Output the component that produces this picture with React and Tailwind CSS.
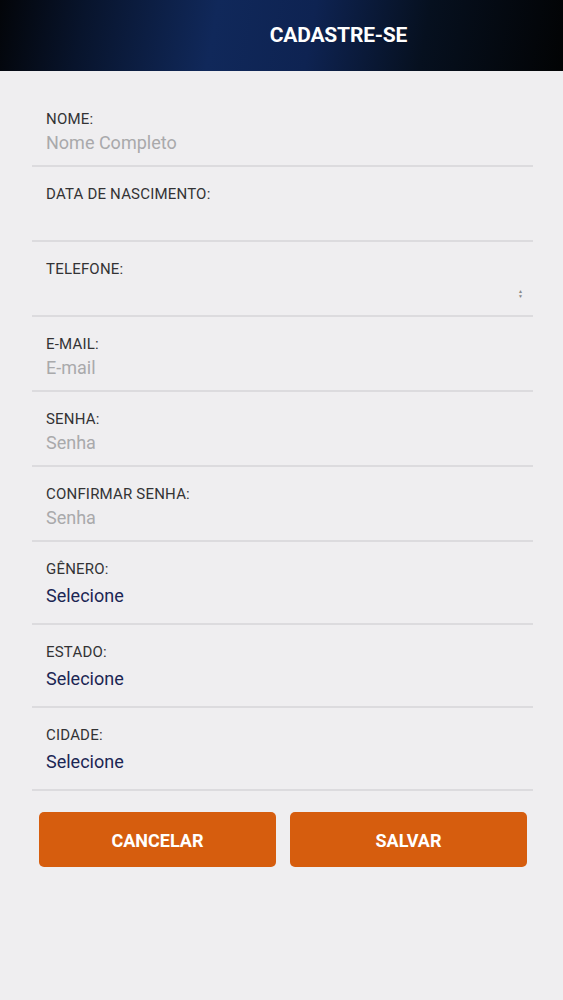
import { useState } from 'react'

const fields = [
  { label: 'NOME:', placeholder: 'Nome Completo', type: 'text' },
  { label: 'DATA DE NASCIMENTO:', placeholder: '', type: 'text' },
  { label: 'TELEFONE:', placeholder: '', type: 'number' },
  { label: 'E-MAIL:', placeholder: 'E-mail', type: 'text' },
  { label: 'SENHA:', placeholder: 'Senha', type: 'text' },
  { label: 'CONFIRMAR SENHA:', placeholder: 'Senha', type: 'text' },
]

const selects = ['GÊNERO:', 'ESTADO:', 'CIDADE:']

function App() {
  const [values, setValues] = useState({})

  return (
    <div className="min-h-[1000px] bg-[#efeef0]" style={{ fontFamily: 'Roboto, "Noto Sans", sans-serif' }}>
      {/* Header */}
      <div className="h-[71px] flex items-center bg-[linear-gradient(100deg,#030509_0%,#08142c_15%,#10285a_38%,#0e2352_55%,#06101f_75%,#020304_100%)]">
        <div className="w-[120px]" />
        <h1 className="flex-1 text-center text-white font-bold text-[21px] tracking-[-0.2px]">CADASTRE-SE</h1>
        <div className="w-[6px]" />
      </div>

      {/* Form */}
      <div className="pl-8 pr-[30px] pt-[21px]">
        {fields.map((f, i) => (
          <div key={i} className="h-[75px] border-b-2 border-[#dcdbde] px-[14px] pt-[16px] relative">
            <div className="text-[15px] leading-[22px] text-[#333335] tracking-[0.2px]">{f.label}</div>
            <div className="h-[26px] text-[18px] leading-[26px] text-[#a9a9ab]">{f.placeholder}</div>
            {f.type === 'number' && (
              <div className="absolute right-[10px] top-[47px] flex flex-col items-center text-[#888] leading-none">
                <span className="text-[5px]">▲</span>
                <span className="text-[5px]">▼</span>
              </div>
            )}
          </div>
        ))}
        {selects.map((s) => (
          <div key={s} className="h-[83px] border-b-2 border-[#dcdbde] px-[14px] pt-[16px]">
            <div className="text-[15px] leading-[22px] text-[#333335] tracking-[0.2px]">{s}</div>
            <select
              className="appearance-none bg-transparent outline-none text-[18px] leading-[32px] h-[32px] text-[#1b2654]"
              value={values[s] || ''}
              onChange={(e) => setValues({ ...values, [s]: e.target.value })}
            >
              <option value="">Selecione</option>
            </select>
          </div>
        ))}

        {/* Buttons */}
        <div className="flex gap-[14px] pl-[7px] pr-[6px] pt-[21px]">
          <button className="flex-1 h-[55px] pt-[2px] rounded-[5px] bg-[#d65d0e] text-white font-bold text-[18px]">CANCELAR</button>
          <button className="flex-1 h-[55px] pt-[2px] rounded-[5px] bg-[#d65d0e] text-white font-bold text-[18px]">SALVAR</button>
        </div>
      </div>
    </div>
  )
}

export default App
